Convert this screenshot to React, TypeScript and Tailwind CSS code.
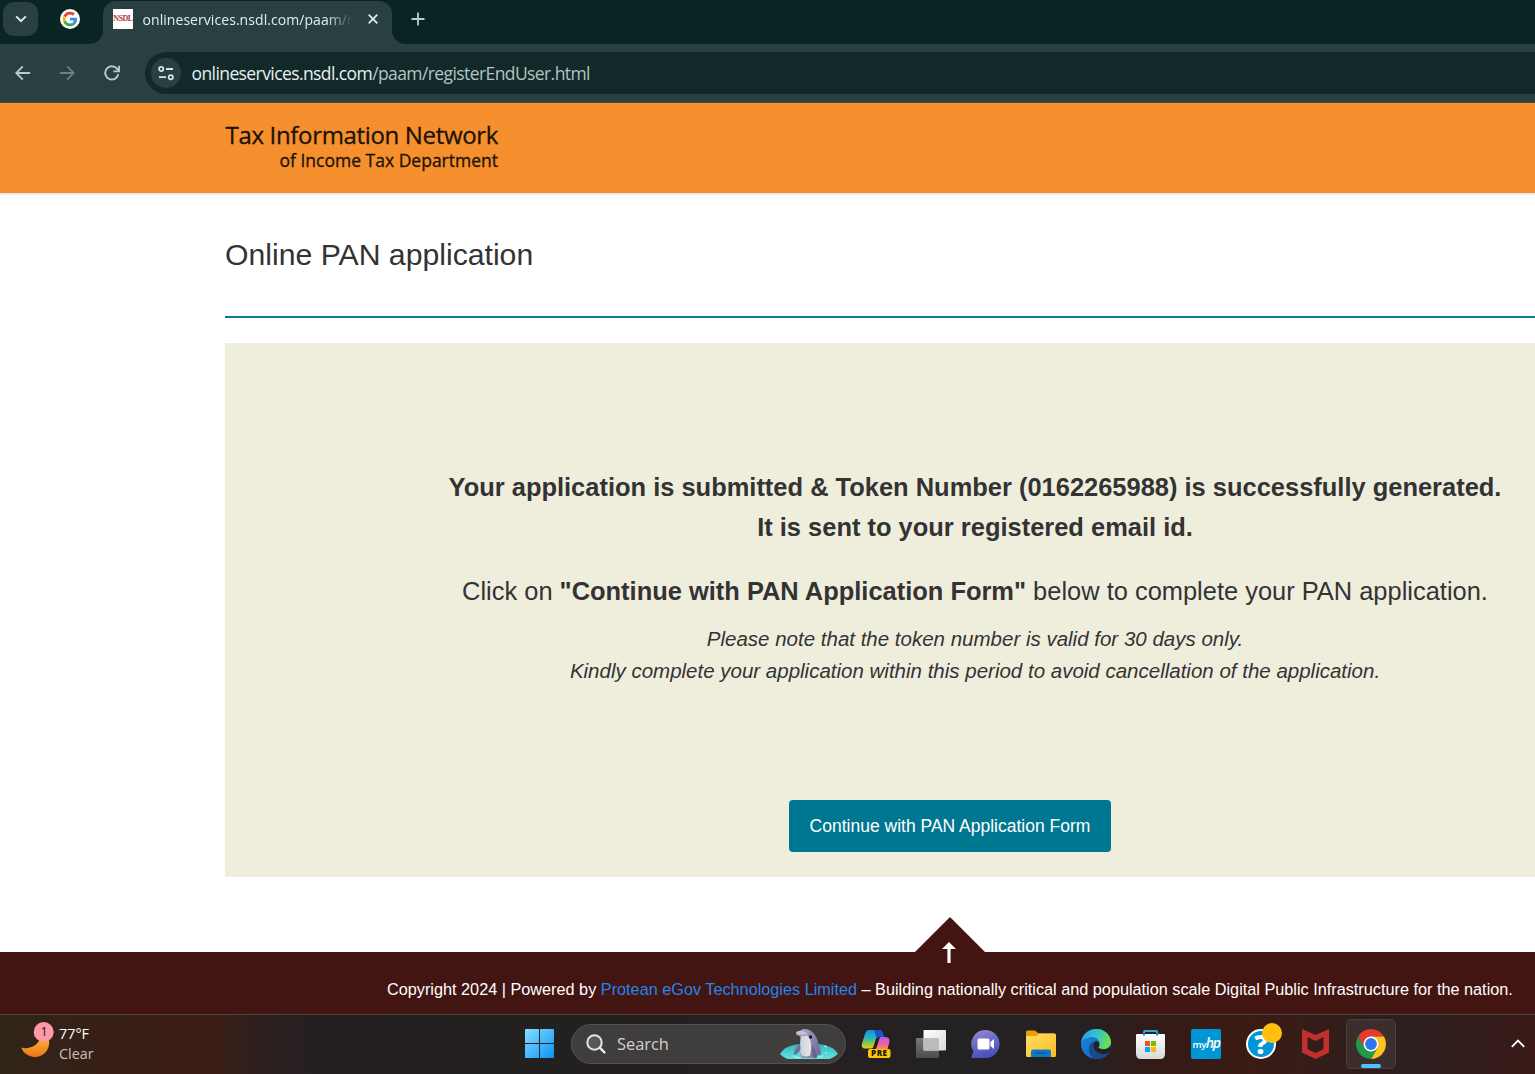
import type { ReactNode } from 'react';

const ui = "font-['Open_Sans','Noto_Sans',sans-serif]";

function GoogleLogo() {
  return (
    <svg viewBox="0 0 20 20" className="size-5">
      <circle cx="10" cy="10" r="10" fill="#fff" />
      <g transform="translate(2.7 2.7) scale(0.304)">
        <path fill="#EA4335" d="M24 9.5c3.54 0 6.71 1.22 9.21 3.6l6.85-6.85C35.9 2.38 30.47 0 24 0 14.62 0 6.51 5.38 2.56 13.22l7.98 6.19C12.43 13.72 17.74 9.5 24 9.5z" />
        <path fill="#4285F4" d="M46.98 24.55c0-1.57-.15-3.09-.38-4.55H24v9.02h12.94c-.58 2.96-2.26 5.48-4.78 7.18l7.73 6c4.51-4.18 7.09-10.36 7.09-17.65z" />
        <path fill="#FBBC05" d="M10.53 28.59c-.48-1.45-.76-2.99-.76-4.59s.27-3.14.76-4.59l-7.98-6.19C.92 16.46 0 20.12 0 24c0 3.88.92 7.54 2.56 10.78l7.97-6.19z" />
        <path fill="#34A853" d="M24 48c6.48 0 11.93-2.13 15.89-5.81l-7.73-6c-2.15 1.45-4.92 2.3-8.16 2.3-6.26 0-11.57-4.22-13.47-9.91l-7.98 6.19C6.51 42.62 14.62 48 24 48z" />
      </g>
    </svg>
  );
}

function TabStrip() {
  return (
    <div className="flex h-11 items-start bg-[#0a2323]">
      <div className="ml-[3px] mt-[2px] flex h-[34px] w-[35px] items-center justify-center rounded-[11px] bg-[#284140]">
        <svg viewBox="0 0 12 8" className="h-2 w-3" fill="none" stroke="#dfe9e8" strokeWidth="2">
          <path d="M1.2 1.4 6 6.2l4.8-4.8" />
        </svg>
      </div>
      <div className="ml-[22px] mt-[9px]">
        <GoogleLogo />
      </div>
      <svg viewBox="0 0 14 14" className="ml-[9px] mt-[30px] h-3.5 w-3.5">
        <path d="M14 0v14H0C8 14 14 8 14 0z" fill="#284140" />
      </svg>
      <div className="mt-px flex h-[43px] w-[289px] items-start rounded-t-[13px] bg-[#284140]">
        <div className="ml-[10px] mt-2 flex size-5 items-start justify-center bg-white pt-[4.5px]">
          <span className="font-['Liberation_Serif',serif] text-[8px] leading-[10px] font-bold tracking-[-0.5px] text-[#b23a3f]">NSDL</span>
        </div>
        <div className={`ml-[9.5px] mt-2 w-[210px] whitespace-nowrap [mask-image:linear-gradient(to_right,#000_184px,transparent_210px)] text-[14px] leading-[21px] tracking-[0.06px] text-[#e3ecec] ${ui}`}>
          onlineservices.nsdl.com/paam/r
        </div>
        <svg viewBox="0 0 10 10" className="ml-[15px] mt-[13px] size-2.5" stroke="#dfe9e8" strokeWidth="1.8">
          <path d="M.7.7l8.6 8.6M9.3.7.7 9.3" />
        </svg>
      </div>
      <svg viewBox="0 0 14 14" className="mt-[30px] h-3.5 w-3.5">
        <path d="M0 0v14h14C6 14 0 8 0 0z" fill="#284140" />
      </svg>
      <svg viewBox="0 0 14 14" className="ml-[4.500px] mt-3 size-3.5" stroke="#b9cfcd" strokeWidth="1.8">
        <path d="M7 .5v13M.5 7h13" />
      </svg>
    </div>
  );
}

function Toolbar() {
  return (
    <div className="flex h-[59px] items-center border-b border-[#4b4a3a] bg-[#284140]">
      <svg viewBox="0 0 16 16" className="ml-[15px] size-4" fill="none" stroke="#b5cdcb" strokeWidth="1.8">
        <path d="M15.2 8H1.5M7.8 1.4 1.2 8l6.6 6.6" />
      </svg>
      <svg viewBox="0 0 16 16" className="ml-[28px] size-4" fill="none" stroke="#6b807f" strokeWidth="1.8">
        <path d="M.8 8h13.7M8.2 1.4 14.8 8l-6.6 6.6" />
      </svg>
      <svg viewBox="0 0 16 16" className="ml-[29px] size-4" fill="none" stroke="#b5cdcb" strokeWidth="1.9">
        <path d="M14.3 9.3A6.6 6.6 0 1 1 12.9 3.6L14.6 5.6" />
        <path d="M15 .8v5.6H9.4" />
      </svg>
      <div className="ml-[25px] flex h-[42px] flex-1 items-center rounded-l-full bg-[#112928]">
        <div className="ml-[6px] flex size-[30px] items-center justify-center rounded-full bg-[#284140]">
          <svg viewBox="0 0 16 16" className="size-4" fill="none" stroke="#d7e3e2" strokeWidth="1.8">
            <circle cx="3.2" cy="4" r="2.1" />
            <path d="M8 4h7M1 12.2h7" />
            <circle cx="12.8" cy="12.2" r="2.1" />
          </svg>
        </div>
        <div className={`ml-[10.500px] whitespace-nowrap text-[17.5px] leading-6 tracking-[-0.59px] text-[#b4c3c2] ${ui}`}>
          <span className="text-[#e6f0ef]">onlineservices.nsdl.com</span>/paam/registerEndUser.html
        </div>
      </div>
    </div>
  );
}

function Page() {
  return (
    <div className="flex h-[911px] flex-col bg-white font-['Liberation_Sans',Arial,sans-serif] text-[#333]">
      <header className="h-[90px] shrink-0 bg-[#f68f2e] pl-[225px] shadow-[0_1px_2px_rgba(0,0,0,0.15)]">
        <div className={`flex w-[273px] flex-col items-end whitespace-nowrap pt-[17px] text-[#1c1305] ${ui}`}>
          <div className="h-[29px] text-[24px] leading-[30px] tracking-[-0.34px] [-webkit-text-stroke:0.3px_#1c1305]">Tax Information Network</div>
          <div className="text-[17.5px] leading-[22px] [-webkit-text-stroke:0.3px_#1c1305]">of Income Tax Department</div>
        </div>
      </header>
      <h1 className="ml-[225px] mt-[42px] h-20 shrink-0 text-[30.2px] leading-[40px]">Online PAN application</h1>
      <div className="ml-[225px] mt-px h-0.5 shrink-0 bg-[#0c7a97]" />
      <main className="ml-[225px] mt-[25px] flex h-[534px] w-[1500px] shrink-0 flex-col bg-[#efeedd] text-center whitespace-nowrap">
        <p className="mt-[124px] text-[25.46px] leading-10 font-bold">
          Your application is submitted &amp; Token Number (0162265988) is successfully generated.
          <br />
          It is sent to your registered email id.
        </p>
        <p className="mt-6 text-[25.44px] leading-10">
          Click on <b>"Continue with PAN Application Form"</b> below to complete your PAN application.
        </p>
        <p className="mt-3 text-[20.5px] leading-8 italic">
          Please note that the token number is valid for 30 days only.
          <br />
          Kindly complete your application within this period to avoid cancellation of the application.
        </p>
        <button className="ml-[564px] mt-[113px] h-[52px] w-[322px] rounded-[4px] bg-[#007790] text-[17.5px] text-white">
          Continue with PAN Application Form
        </button>
      </main>
      <div className="mt-10 flex h-[35px] shrink-0 justify-center pl-[365px]">
        <svg viewBox="0 0 70 35" className="h-[35px] w-[70px]">
          <path d="M35 0 70 35H0z" fill="#431512" />
        </svg>
      </div>
      <footer className="relative h-[62px] shrink-0 bg-[#431512]">
        <svg viewBox="0 0 14 21" className="absolute left-[942px] -top-[10px] h-[21px] w-3.5" fill="#fff">
          <path d="M7 0 14 7H8.6V21H5.4V7H0z" />
        </svg>
        <p className="ml-[387px] pt-[25px] text-[16.26px] leading-6 whitespace-nowrap text-white">
          Copyright 2024 | Powered by <span className="text-[#2484ea]">Protean eGov Technologies Limited</span> – Building nationally critical and population scale Digital Public Infrastructure for the nation.
        </p>
      </footer>
    </div>
  );
}

function Slot({ className, children }: { className: string; children: ReactNode }) {
  return <div className={`flex shrink-0 items-center justify-center ${className}`}>{children}</div>;
}

function Taskbar() {
  return (
    <div className={`flex h-[60px] items-center border-t border-[#4d4240] bg-[linear-gradient(to_right,#302419_0px,#381f16_110px,#3b1d16_210px,#2c1f20_270px,#242021_310px,#232020_560px,#262021_820px,#232122_950px,#262021_1090px,#331b16_1160px,#3b1b14_1250px,#351c18_1320px,#2c1f1e_1400px,#311d1c_1460px,#3a1a17_1535px)] pb-[2px] ${ui}`}>
      <div className="relative -mt-[7px] ml-[21px] h-9 w-[34px]">
        <svg viewBox="0 0 34 36" className="h-9 w-[34px] overflow-visible">
          <defs>
            <linearGradient id="moon" x1="0" y1="0" x2="0" y2="1">
              <stop offset="0" stopColor="#fbc531" />
              <stop offset="1" stopColor="#ee7220" />
            </linearGradient>
          </defs>
          <path d="M.3 25.500C7 28 20 24 19.500 12L27 14C29.500 20 28 27 24 31 17 37.500 4 36 .3 25.500z" fill="url(#moon)" />
          <circle cx="22.700" cy="10" r="10" fill="#fe99a5" />
        </svg>
        <span className="absolute left-[13px] top-[1px] w-5 text-center text-[12.5px] leading-[18px] text-[#2a1719]">1</span>
      </div>
      <div className="ml-1 flex w-20 flex-col text-[14.4px] leading-5 whitespace-nowrap">
        <span className="text-white">77°F</span>
        <span className="text-[#c9c2c0]">Clear</span>
      </div>

      <svg viewBox="0 0 29 29" className="ml-[386px] size-[29px]">
        <defs>
          <linearGradient id="win" x1="0" y1="0" x2="1" y2="1">
            <stop offset="0" stopColor="#86defd" />
            <stop offset="1" stopColor="#0a93f7" />
          </linearGradient>
        </defs>
        <path d="M1 0H14V14H0V1Q0 0 1 0zM15 0H28Q29 0 29 1V14H15zM0 15H14V29H1Q0 29 0 28zM15 15H29V28Q29 29 28 29H15z" fill="url(#win)" />
      </svg>

      <div className="ml-[17px] flex h-10 w-[275px] items-center rounded-full border border-[#555152] bg-[#403d3d]">
        <svg viewBox="0 0 20 20" className="ml-[14px] size-5" fill="none" stroke="#e6e6e6" strokeWidth="2">
          <circle cx="8.500" cy="8.500" r="7.200" fill="#5a5758" />
          <path d="m13.700 13.700 4.700 4.700" strokeWidth="2.400" strokeLinecap="round" />
        </svg>
        <span className="ml-[11px] w-[163px] text-[16.4px] leading-6 text-[#d3d1d1]">Search</span>
        <svg viewBox="0 0 58 32" className="h-8 w-[58px]">
          <defs>
            <linearGradient id="sea" x1="0" y1="0" x2="0" y2="1">
              <stop offset="0" stopColor="#2fb5be" />
              <stop offset="1" stopColor="#62e4e3" />
            </linearGradient>
            <linearGradient id="dol" x1="0" y1="0" x2="1" y2="0.4">
              <stop offset="0" stopColor="#b9aac9" />
              <stop offset="1" stopColor="#77729c" />
            </linearGradient>
            <linearGradient id="belly" x1="0" y1="0" x2="1" y2="0">
              <stop offset="0" stopColor="#c5d2da" />
              <stop offset="1" stopColor="#eee5e4" />
            </linearGradient>
          </defs>
          <path d="M0 26C5 17 17 15.500 29 15.500S53 17 58 26C53 30 50 31 48 31H10C7 31 4 30 0 26z" fill="url(#sea)" />
          <path d="M19 5C20 1 24 .3 28 1.500c6 2 9 8 10.500 14 1.500 3 3 9 2.500 11l-4 1-3 2.500H22C18 24 20.500 14 21 8z" fill="url(#dol)" />
          <path d="M20.500 7.500c3-.5 7-.5 8.500 1.500 2.500 4 2.500 13 1 18.500-2.500 1.500-7 1-8.500-.5C19 22 21 14 20.500 7.500z" fill="url(#belly)" />
          <path d="M16 5C16.500 3 20 2 24 3.500c3 1.200 4 2.500 3 3.800-2 1.700-5 1.700-7 .7-2-.6-4-1-4-3z" fill="#c9bfd6" />
          <path d="M17 6.600C20 7.500 23 7.800 26.500 6.800" stroke="#8c83a6" strokeWidth="0.800" fill="none" />
          <path d="M20 16c-3 2-6 6-6.500 11 3-.5 6-3 7-6z" fill="#716d93" />
          <path d="M32 18c1 4-1 7 2 12 2 1 4-1 3-3-1-4-2-7-5-9z" fill="#67658b" />
          <circle cx="30.500" cy="9" r="1.700" fill="#15182b" />
          <path d="M13 27.500c3 2 5 2.500 7 2M38 28c2 2 4 1 5-.5M44 18l3 1M45 24l2 1.500" stroke="#c8fbf8" strokeWidth="1" fill="none" />
        </svg>
      </div>

      <Slot className="ml-[10px] w-10">
        <svg viewBox="0 0 30 29" className="h-[29px] w-[30px]">
          <defs>
            <linearGradient id="cpA" x1="0" y1="0" x2="0" y2="1">
              <stop offset="0" stopColor="#1d8cf2" />
              <stop offset="0.450" stopColor="#2cb6b0" />
              <stop offset="0.750" stopColor="#8fce3d" />
              <stop offset="1" stopColor="#f5c81d" />
            </linearGradient>
            <linearGradient id="cpB" x1="0" y1="0" x2="0" y2="1">
              <stop offset="0" stopColor="#b45cf1" />
              <stop offset="0.600" stopColor="#f0619a" />
              <stop offset="1" stopColor="#fb8b5c" />
            </linearGradient>
          </defs>
          <path d="M8 1h10c2.500 0 3.500 2 4 4l1 3h-5c-2 0-3 1-3.500 3l-2 6.500c-.6 1.500-1.300 2-3 2H4C1 19.500.3 17 1 14.500l3-9.500C5 2.500 6 1 8 1z" fill="url(#cpA)" />
          <path d="M13 1h5c2.500 0 3.500 2 4 4l1 3h-5c-1.300 0-2 .4-2.500 1z" fill="#1a54c8" />
          <path d="M19 8h5.500c3.500 0 4.500 3 3.800 5.500L26.500 20H15z" fill="url(#cpB)" />
          <rect x="7" y="20" width="22.500" height="9" rx="2" fill="#fdc40c" />
          <text x="18.300" y="27.300" textAnchor="middle" fontFamily="Open Sans" fontSize="8" fontWeight="800" letterSpacing="0.500" fill="#1c1804">PRE</text>
        </svg>
      </Slot>

      <Slot className="ml-[15px] w-10">
        <svg viewBox="0 0 30 28" className="h-7 w-[30px]">
          <defs>
            <linearGradient id="tvA" x1="0" y1="0" x2="1" y2="1">
              <stop offset="0" stopColor="#fff" />
              <stop offset="1" stopColor="#dadada" />
            </linearGradient>
            <linearGradient id="tvB" x1="0" y1="0" x2="0" y2="1">
              <stop offset="0" stopColor="#777" />
              <stop offset="1" stopColor="#4c4c4c" />
            </linearGradient>
          </defs>
          <rect y="8" width="23" height="20" rx="1" fill="url(#tvB)" />
          <rect x="7.500" width="22.500" height="20.500" rx="1" fill="url(#tvA)" />
          <path d="M7.500 8H23V20.500H8.500Q7.500 20.500 7.500 19.500z" fill="#bcbcbc" />
        </svg>
      </Slot>

      <Slot className="ml-[15px] w-10">
        <svg viewBox="0 0 29 28" className="mr-px h-7 w-[29px]">
          <defs>
            <linearGradient id="chat" x1="0" y1="0" x2="0.300" y2="1">
              <stop offset="0" stopColor="#a487d3" />
              <stop offset="0.400" stopColor="#7272cd" />
              <stop offset="1" stopColor="#4d50be" />
            </linearGradient>
          </defs>
          <path d="M14.500 0a14 14 0 1 1 0 28H2.500C.5 28 0 27 .8 25.500L2.500 21.500A14 14 0 0 1 14.500 0z" fill="url(#chat)" />
          <rect x="6.500" y="8.500" width="12" height="11" rx="1.500" fill="#fff" />
          <path d="M19.500 12 23 9v10l-3.500-3z" fill="#fff" />
        </svg>
      </Slot>

      <Slot className="ml-[15px] w-10">
        <svg viewBox="0 0 30 27" className="h-[27px] w-[30px]">
          <defs>
            <linearGradient id="fold" x1="0" y1="0" x2="1" y2="1">
              <stop offset="0" stopColor="#ffdc6a" />
              <stop offset="1" stopColor="#fcbd20" />
            </linearGradient>
          </defs>
          <path d="M0 2Q0 .5 1.500.5H9L12.500 3.500H28Q30 3.500 30 5V10H0z" fill="#e2a108" />
          <path d="M0 6H10L13 3.500H28.500Q30 3.500 30 5V25.500Q30 27 28.500 27H1.500Q0 27 0 25.500z" fill="url(#fold)" />
          <path d="M5 27V21.500Q5 19.500 7 19.500H23Q25 19.500 25 21.500V27z" fill="#0f78c4" />
          <path d="M9 23.200H21" stroke="#0a4f8d" strokeWidth="1.200" />
        </svg>
      </Slot>

      <Slot className="ml-[15px] w-10">
        <svg viewBox="0 0 30 30" className="size-[30px]">
          <defs>
            <linearGradient id="edA" x1="0" y1="0.200" x2="1" y2="0.500">
              <stop offset="0" stopColor="#2a9ce4" />
              <stop offset="0.450" stopColor="#32c0d6" />
              <stop offset="1" stopColor="#6be04b" />
            </linearGradient>
            <linearGradient id="edB" x1="0" y1="0" x2="0.600" y2="1">
              <stop offset="0" stopColor="#1b8bdc" />
              <stop offset="1" stopColor="#1368c4" />
            </linearGradient>
          </defs>
          <circle cx="15" cy="15" r="15" fill="url(#edB)" />
          <path d="M.2 13C1.500 5 8 0 15.500 0 24 0 30 6.500 30 13c0 4.500-3.500 7.200-7 7.200-3.200 0-5.500-1-5.500-2.200 0-.8 1.300-1.500 1.300-3.600C18.800 11 15.500 8 11 8 6 8 2 10.500.2 13z" fill="url(#edA)" />
          <path d="M13 12.500c-2.500 3.500-1.500 9 3 11.300 4 2 9 1.200 11.800-.6.6-.4 1 0 .7.5C25.500 28 20.500 30 16 30 10 29 7.500 24.500 8 19.500c.3-3.500 2.300-6 5-7z" fill="#17498f" />
          <path d="M18.300 16.500c-.4 1-1 1.200-.8 2 .5 1.300 2.700 1.800 5.500 1.700 3 0 5.700-1.800 6.600-4.200C29.500 19 29 21 28 23c-3 2.500-8 2.800-11.800.6-3-1.800-4.400-5-4-8 .4-2 1.800-3.600 3-3.600 2 0 3.500 2.500 3.100 4.500z" fill="#262020" />
        </svg>
      </Slot>

      <Slot className="ml-[15px] w-10">
        <svg viewBox="0 0 29 30" className="mr-px h-[30px] w-[29px]">
          <defs>
            <linearGradient id="bag" x1="0" y1="0" x2="0" y2="1">
              <stop offset="0" stopColor="#fff" />
              <stop offset="1" stopColor="#d9d9d9" />
            </linearGradient>
          </defs>
          <path d="M8 7V3.200Q8 2 9.200 2H20Q21.200 2 21.200 3.200V7" fill="none" stroke="#28a9ea" strokeWidth="2" />
          <path d="M0 6Q0 5 1 5H28Q29 5 29 6V25Q29 30 24 30H5Q0 30 0 25z" fill="url(#bag)" />
          <path d="M8 4V6.500M21.200 4V6.500" stroke="#1680c4" strokeWidth="2" />
          <path fill="#f25022" d="M9 12h5v5H9z" />
          <path fill="#7fba00" d="M15 12h5v5h-5z" />
          <path fill="#00a4ef" d="M9 18h5v5H9z" />
          <path fill="#ffb900" d="M15 18h5v5h-5z" />
        </svg>
      </Slot>

      <Slot className="ml-[15px] w-10">
        <div className="flex size-[30px] items-baseline justify-center rounded-[2px] bg-[#0096d6] pt-[7px] leading-none text-white">
          <span className="text-[9.5px] font-semibold tracking-[-0.4px]">my</span>
          <span className="text-[14px] font-semibold tracking-[-1.4px] italic">hp</span>
        </div>
      </Slot>

      <Slot className="relative ml-[15px] w-10">
        <div className="flex size-[30px] items-center justify-center rounded-full border-2 border-white bg-[#0096d6] text-[27px] leading-none font-extrabold text-white">?</div>
        <div className="absolute -top-[6px] left-[20.500px] size-5 rounded-full bg-[#ffbf0f]" />
      </Slot>

      <Slot className="ml-[15px] w-10">
        <svg viewBox="0 0 27 30" className="mr-px h-[30px] w-[27px]">
          <path d="M0 0 13.500 6 27 0V23.500L13.500 30 0 23.500zM5.500 8V20L13.500 24 21.500 20V8L13.500 12z" fill="#c0302f" fillRule="evenodd" />
        </svg>
      </Slot>

      <div className="ml-[10px] flex h-[50px] w-[50px] shrink-0 flex-col items-center rounded-[5px] border border-[#4c3c3c] bg-[#3d2e2e] pt-[9px]">
        <svg viewBox="0 0 30 30" className="size-[30px]">
          <path d="M2.010 7.500A15 15 0 0 1 27.990 7.500L15 7.500 8.500 18.750z" fill="#e33b2e" />
          <path d="M27.990 7.500A15 15 0 0 1 15 30L21.500 18.750 15 7.500z" fill="#fcc31e" />
          <path d="M15 30A15 15 0 0 1 2.010 7.500L8.500 18.750 21.500 18.750z" fill="#1f9a49" />
          <circle cx="15" cy="15" r="7.500" fill="#fff" />
          <circle cx="15" cy="15" r="5.900" fill="#2f74e8" />
        </svg>
        <div className="mt-[5px] h-1 w-5 rounded-full bg-[#4cc2ff]" />
      </div>

      <svg viewBox="0 0 14 9" className="ml-[115px] h-[9px] w-3.5" fill="none" stroke="#fff" strokeWidth="1.800">
        <path d="M.8 7.800 7 1.500l6.200 6.300" />
      </svg>
    </div>
  );
}

export default function App() {
  return (
    <div className="flex h-[1074px] w-[1535px] flex-col overflow-hidden">
      <TabStrip />
      <Toolbar />
      <Page />
      <Taskbar />
    </div>
  );
}
